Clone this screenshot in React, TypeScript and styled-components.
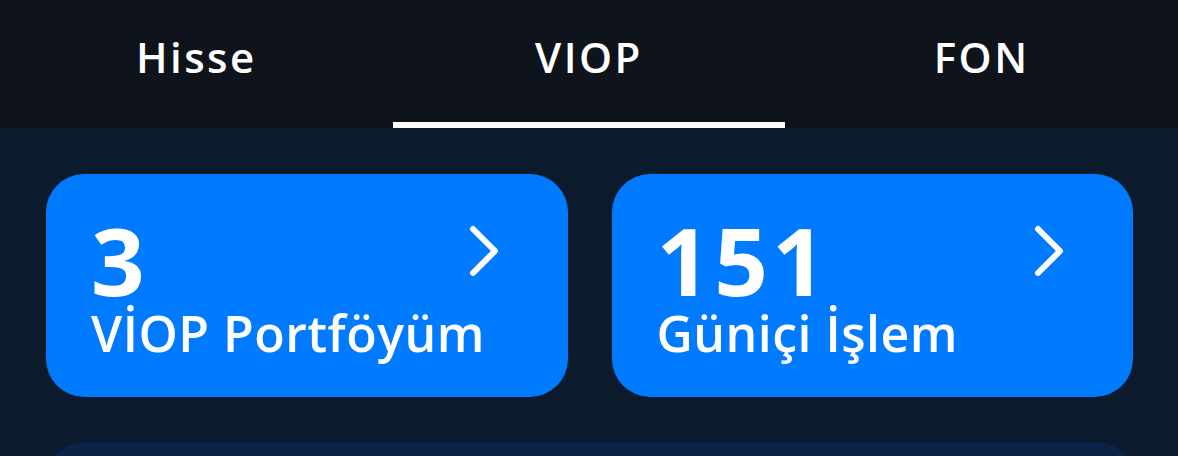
import React from "react";
import styled, { createGlobalStyle } from "styled-components";

const Global = createGlobalStyle`
  html, body { margin: 0; padding: 0; background: #0c1a2e; }
  body { font-family: "Open Sans", "Noto Sans", sans-serif; -webkit-font-smoothing: antialiased; }
`;

const Page = styled.div`
  width: 1178px;
  height: 456px;
  overflow: hidden;
  background: #0c1a2e;
  display: flex;
  flex-direction: column;
`;

const TabBar = styled.nav`
  flex: 0 0 128px;
  height: 128px;
  background: #0e131c;
  display: grid;
  grid-template-columns: repeat(3, 1fr);
`;

const Tab = styled.button<{ $active?: boolean }>`
  position: relative;
  border: 0;
  background: transparent;
  color: #ffffff;
  font-family: "Open Sans", sans-serif;
  font-weight: 600;
  font-size: 42px;
  letter-spacing: 2.5px;
  padding: 0 0 15px;
  display: flex;
  align-items: center;
  justify-content: center;
  &::after {
    content: "";
    position: absolute;
    left: 0;
    right: 0;
    bottom: 0;
    height: 6px;
    background: ${(p) => (p.$active ? "#ffffff" : "transparent")};
  }
`;

const Content = styled.main`
  padding: 46px 45px 0 46px;
  display: flex;
  flex-direction: column;
  gap: 45px;
`;

const CardRow = styled.div`
  display: grid;
  grid-template-columns: 1fr 1fr;
  gap: 44px;
`;

const Card = styled.a`
  position: relative;
  height: 223px;
  background: #007aff;
  border-radius: 38px;
  color: #ffffff;
  padding: 38px 0 0 45px;
  box-sizing: border-box;
  display: flex;
  flex-direction: column;
  text-decoration: none;
`;

const Count = styled.div`
  font-family: "Open Sans", sans-serif;
  font-weight: 700;
  font-size: 94px;
  letter-spacing: 4px;
  line-height: 96px;
`;

const Label = styled.div`
  font-family: "Open Sans", sans-serif;
  font-weight: 600;
  font-size: 50px;
  letter-spacing: 0.5px;
  line-height: 51px;
`;

const Chevron = styled.svg`
  position: absolute;
  top: 51px;
  right: 68px;
  width: 32px;
  height: 56px;
`;

const Panel = styled.section`
  height: 120px;
  background: #0c2347;
  border-radius: 36px;
  margin-left: 2px;
`;

function ChevronRight() {
  return (
    <Chevron viewBox="0 0 32 56" fill="none">
      <path
        d="M5 4 L27 26 L5 48"
        stroke="#ffffff"
        strokeWidth="6"
        strokeLinecap="round"
        strokeLinejoin="round"
      />
    </Chevron>
  );
}

const cards = [
  { count: "3", label: "VİOP Portföyüm" },
  { count: "151", label: "Güniçi İşlem" },
];

export default function App() {
  return (
    <Page>
      <Global />
      <TabBar>
        <Tab>Hisse</Tab>
        <Tab $active>VIOP</Tab>
        <Tab>FON</Tab>
      </TabBar>
      <Content>
        <CardRow>
          {cards.map((c) => (
            <Card key={c.label} href="#">
              <Count>{c.count}</Count>
              <Label>{c.label}</Label>
              <ChevronRight />
            </Card>
          ))}
        </CardRow>
        <Panel />
      </Content>
    </Page>
  );
}
